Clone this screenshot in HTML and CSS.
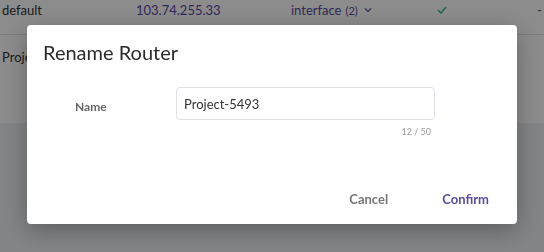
FILE: index.html
```html
<!DOCTYPE html>
<html lang="en">
<head>
    <meta charset="UTF-8">
    <title>Rename Router</title>
    <link rel="stylesheet" href="styles.css">
</head>
<body>
    <div class="table">
        <div class="row row-first">
            <span class="cell cell-name">default</span>
            <span class="cell cell-ip">103.74.255.33</span>
            <span class="cell cell-iface">interface <small>(2)</small>
                <svg class="chev" width="8" height="6" viewBox="0 0 8 6"><path d="M1 1.5 L4 4.5 L7 1.5" fill="none" stroke="currentColor" stroke-width="1.2"/></svg>
            </span>
            <span class="cell cell-ok">
                <svg width="10" height="8" viewBox="0 0 10 8"><path d="M1 4 L4 7 L9 1" fill="none" stroke="currentColor" stroke-width="1.6"/></svg>
            </span>
            <span class="cell cell-dash">-</span>
        </div>
        <div class="row row-second">
            <span class="cell cell-name">Project-5493</span>
        </div>
    </div>

    <div class="overlay">
        <div class="modal">
            <h2 class="modal-title">Rename Router</h2>
            <div class="form-row">
                <label class="form-label" for="name">Name</label>
                <div class="form-field">
                    <input type="text" id="name" class="form-input" value="Project-5493">
                    <div class="counter">12 / 50</div>
                </div>
            </div>
            <div class="modal-footer">
                <button class="btn btn-cancel">Cancel</button>
                <button class="btn btn-confirm">Confirm</button>
            </div>
        </div>
    </div>
</body>
</html>
```

FILE: styles.css
```css
:root {
    --primary-color: #5c4a9e;
    --text-primary: #333333;
    --text-secondary: #666666;
    --border-color: #dcdfe6;
}

* {
    margin: 0;
    padding: 0;
    box-sizing: border-box;
}

body {
    font-family: 'Lato', 'Liberation Sans', sans-serif;
    background-color: #eef0f4;
    color: var(--text-primary);
    width: 544px;
    height: 252px;
    overflow: hidden;
}

.table {
    background: #ffffff;
}

.row {
    display: flex;
    align-items: flex-start;
    font-size: 13px;
    border-bottom: 1px solid #e4e4e4;
}

.row-first {
    height: 35px;
    padding-top: 2px;
}

.row-second {
    height: 88px;
    padding-top: 14px;
    border-bottom: none;
}

.cell {
    display: inline-flex;
    align-items: center;
    gap: 4px;
}

.cell-name {
    width: 136px;
    padding-left: 2px;
}

.cell-ip {
    width: 155px;
    color: var(--primary-color);
}

.cell-iface {
    width: 146px;
    color: var(--primary-color);
}

.cell-iface small {
    font-size: 11px;
}

.chev {
    margin-left: 2px;
}

.cell-ok {
    width: 100px;
    color: #3cc18a;
    padding-top: 4px;
}

.cell-dash {
    color: #555;
}

.overlay {
    position: fixed;
    inset: 0;
    background: rgba(0, 0, 0, 0.45);
    padding: 25px 0 0 27px;
}

.modal {
    width: 490px;
    height: 199px;
    background: #ffffff;
    border-radius: 4px;
    box-shadow: 0 6px 24px rgba(0, 0, 0, 0.3);
    padding: 15px 16px 0 16px;
    display: flex;
    flex-direction: column;
}

.modal-title {
    font-size: 20px;
    font-weight: 400;
    line-height: 24px;
    color: #2b2b2b;
}

.form-row {
    display: flex;
    margin-top: 23px;
    padding-left: 32px;
}

.form-label {
    width: 101px;
    font-size: 12px;
    font-weight: 700;
    color: #666;
    padding-top: 12px;
}

.form-field {
    width: 259px;
}

.form-input {
    width: 100%;
    height: 33px;
    border: 1px solid var(--border-color);
    border-radius: 4px;
    padding: 0 7px;
    font-family: inherit;
    font-size: 13px;
    color: var(--text-primary);
    outline: none;
}

.counter {
    text-align: right;
    font-size: 9px;
    color: #999;
    padding-right: 4px;
    margin-top: 6px;
}

.modal-footer {
    display: flex;
    justify-content: flex-end;
    margin-top: 48px;
    padding-right: 12px;
}

.btn {
    background: none;
    border: none;
    font-family: inherit;
    font-size: 13px;
    font-weight: 700;
    padding: 6px 0;
    cursor: pointer;
}

.btn-cancel {
    color: #777;
    width: 93px;
    text-align: left;
}

.btn-confirm {
    color: var(--primary-color);
}
```
